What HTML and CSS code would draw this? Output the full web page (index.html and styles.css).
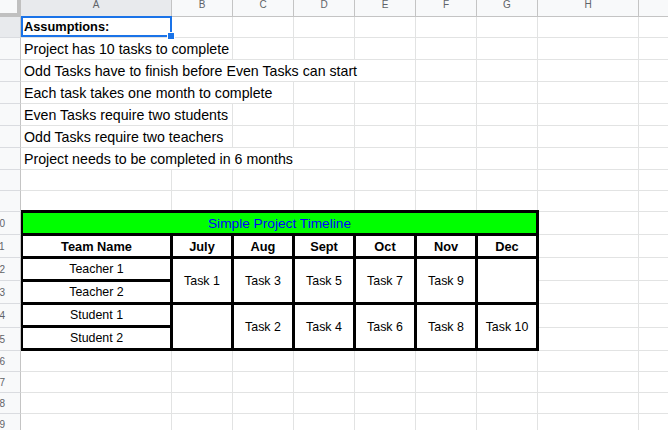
FILE: index.html
```html
<!DOCTYPE html>
<html>
<head>
<meta charset="utf-8">
<title>Simple Project Timeline</title>
<link rel="stylesheet" href="styles.css">
</head>
<body>
<div class="sheet">
  <!-- column headers -->
  <div class="corner"></div>
  <div class="ch ch-sel">A</div>
  <div class="ch">B</div>
  <div class="ch">C</div>
  <div class="ch">D</div>
  <div class="ch">E</div>
  <div class="ch">F</div>
  <div class="ch">G</div>
  <div class="ch">H</div>
  <div class="ch"></div>

  <!-- row 1 -->
  <div class="rh rh-sel">1</div>
  <div class="c txt txt-bold sel">Assumptions:</div>
  <div class="c"></div><div class="c"></div><div class="c"></div><div class="c"></div><div class="c"></div><div class="c"></div><div class="c"></div><div class="c"></div>

  <!-- row 2 -->
  <div class="rh">2</div>
  <div class="c txt span2">Project has 10 tasks to complete</div>
  <div class="c"></div><div class="c"></div><div class="c"></div><div class="c"></div><div class="c"></div><div class="c"></div><div class="c"></div>

  <!-- row 3 -->
  <div class="rh">3</div>
  <div class="c txt span5">Odd Tasks have to finish before Even Tasks can start</div>
  <div class="c"></div><div class="c"></div><div class="c"></div><div class="c"></div>

  <!-- row 4 -->
  <div class="rh">4</div>
  <div class="c txt span3">Each task takes one month to complete</div>
  <div class="c"></div><div class="c"></div><div class="c"></div><div class="c"></div><div class="c"></div><div class="c"></div>

  <!-- row 5 -->
  <div class="rh">5</div>
  <div class="c txt span2">Even Tasks require two students</div>
  <div class="c"></div><div class="c"></div><div class="c"></div><div class="c"></div><div class="c"></div><div class="c"></div><div class="c"></div>

  <!-- row 6 -->
  <div class="rh">6</div>
  <div class="c txt span2">Odd Tasks require two teachers</div>
  <div class="c"></div><div class="c"></div><div class="c"></div><div class="c"></div><div class="c"></div><div class="c"></div><div class="c"></div>

  <!-- row 7 -->
  <div class="rh">7</div>
  <div class="c txt span4">Project needs to be completed in 6 months</div>
  <div class="c"></div><div class="c"></div><div class="c"></div><div class="c"></div><div class="c"></div>

  <!-- row 8 -->
  <div class="rh">8</div>
  <div class="c"></div><div class="c"></div><div class="c"></div><div class="c"></div><div class="c"></div><div class="c"></div><div class="c"></div><div class="c"></div><div class="c"></div>

  <!-- row 9 -->
  <div class="rh">9</div>
  <div class="c"></div><div class="c"></div><div class="c"></div><div class="c"></div><div class="c"></div><div class="c"></div><div class="c"></div><div class="c"></div><div class="c"></div>

  <!-- rows 10-15 (A-G hold the timeline table) -->
  <div class="rh rh2">10</div><div class="c"></div><div class="c"></div>
  <div class="rh rh2">11</div><div class="c"></div><div class="c"></div>
  <div class="rh rh2">12</div><div class="c"></div><div class="c"></div>
  <div class="rh rh2">13</div><div class="c"></div><div class="c"></div>
  <div class="rh rh2">14</div><div class="c"></div><div class="c"></div>
  <div class="rh rh2">15</div><div class="c"></div><div class="c"></div>

  <!-- rows 16-19 -->
  <div class="rh rh2">16</div>
  <div class="c"></div><div class="c"></div><div class="c"></div><div class="c"></div><div class="c"></div><div class="c"></div><div class="c"></div><div class="c"></div><div class="c"></div>
  <div class="rh rh2">17</div>
  <div class="c"></div><div class="c"></div><div class="c"></div><div class="c"></div><div class="c"></div><div class="c"></div><div class="c"></div><div class="c"></div><div class="c"></div>
  <div class="rh rh2">18</div>
  <div class="c"></div><div class="c"></div><div class="c"></div><div class="c"></div><div class="c"></div><div class="c"></div><div class="c"></div><div class="c"></div><div class="c"></div>
  <div class="rh rh2">19</div>
  <div class="c"></div><div class="c"></div><div class="c"></div><div class="c"></div><div class="c"></div><div class="c"></div><div class="c"></div><div class="c"></div><div class="c"></div>

  <!-- timeline table -->
  <div class="timeline">
    <div class="tc t-title">Simple Project Timeline</div>
    <div class="tc t-head">Team Name</div>
    <div class="tc t-head">July</div>
    <div class="tc t-head">Aug</div>
    <div class="tc t-head">Sept</div>
    <div class="tc t-head">Oct</div>
    <div class="tc t-head">Nov</div>
    <div class="tc t-head">Dec</div>

    <div class="tc">Teacher 1</div>
    <div class="tc t-tall">Task 1</div>
    <div class="tc t-tall">Task 3</div>
    <div class="tc t-tall">Task 5</div>
    <div class="tc t-tall">Task 7</div>
    <div class="tc t-tall">Task 9</div>
    <div class="tc t-tall"></div>
    <div class="tc">Teacher 2</div>

    <div class="tc">Student 1</div>
    <div class="tc t-tall"></div>
    <div class="tc t-tall">Task 2</div>
    <div class="tc t-tall">Task 4</div>
    <div class="tc t-tall">Task 6</div>
    <div class="tc t-tall">Task 8</div>
    <div class="tc t-tall">Task 10</div>
    <div class="tc">Student 2</div>
  </div>
</div>
</body>
</html>
```
FILE: styles.css
```css
html, body {
  margin: 0;
  padding: 0;
}
body {
  width: 668px;
  height: 430px;
  overflow: hidden;
  background: #ffffff;
  font-family: "Liberation Sans", Arial, sans-serif;
}
.sheet {
  display: grid;
  width: max-content;
  margin-left: -26px;
  grid-template-columns: 47px 151px repeat(6, 61px) 101px 101px;
  grid-template-rows: 17px 21px repeat(6, 22px) 21px 21px 23px 23px 23px 23px 24px 23px repeat(4, 21px);
}
.sheet > div {
  box-sizing: border-box;
  min-width: 0;
}
.corner {
  background: #f8f9fa;
  border-right: 4px solid #c0c0c0;
  border-bottom: 4px solid #c0c0c0;
}
.ch {
  background: #f8f9fa;
  border-right: 1px solid #c4c4c4;
  border-bottom: 1px solid #c4c4c4;
  display: flex;
  justify-content: center;
  align-items: flex-start;
  font-size: 10px;
  line-height: 10px;
  color: #5f6368;
}
.ch-sel {
  background: #e8eaed;
}
.rh {
  background: #f8f9fa;
  border-right: 1px solid #c4c4c4;
  border-bottom: 1px solid #dadce0;
  display: flex;
  justify-content: center;
  align-items: center;
  padding-right: 3px;
  font-size: 10px;
  color: #5f6368;
  overflow: hidden;
}
.rh2 {
  padding-right: 0;
  padding-left: 5px;
}
.rh-sel {
  background: #e8eaed;
}
.c {
  border-right: 1px solid #e2e3e3;
  border-bottom: 1px solid #e2e3e3;
}
.txt {
  display: flex;
  align-items: flex-end;
  padding: 0 3px 2px 3px;
  font-size: 14.2px;
  color: #000000;
  white-space: nowrap;
}
.txt-bold {
  font-weight: bold;
  font-size: 12.8px;
  padding-bottom: 3px;
}
.span2 { grid-column: span 2; }
.span3 { grid-column: span 3; }
.span4 { grid-column: span 4; }
.span5 { grid-column: span 5; }

.sel {
  position: relative;
}
.sel::before {
  content: "";
  position: absolute;
  top: -1px;
  left: 0;
  right: -1px;
  bottom: 0;
  border: 2px solid #1a73e8;
}
.sel::after {
  content: "";
  position: absolute;
  left: 146px;
  top: 15px;
  width: 8px;
  height: 8px;
  box-sizing: border-box;
  background: #1a73e8;
  border: 1px solid #ffffff;
}

.timeline {
  grid-column: 2 / 9;
  grid-row: 11 / 17;
  margin: -2px -1px 0 0;
  display: grid;
  grid-template-columns: 147px repeat(6, 58px);
  grid-template-rows: repeat(6, 20px);
  gap: 3px;
  background: #000000;
  border-style: solid;
  border-color: #000000;
  border-width: 3px 3px 3px 2px;
}
.tc {
  background: #ffffff;
  display: flex;
  align-items: center;
  justify-content: center;
  font-size: 12.4px;
  color: #000000;
  white-space: nowrap;
}
.t-title {
  grid-column: 1 / -1;
  background: #00ff00;
  color: #0000ff;
  font-size: 13.7px;
}
.t-head {
  font-weight: bold;
  font-size: 12.8px;
}
.t-tall {
  grid-row: span 2;
}
```
